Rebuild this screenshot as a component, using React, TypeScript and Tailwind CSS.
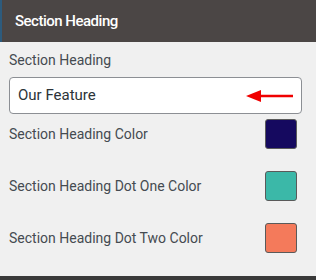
import React from "react";

const Swatch = ({ color }: { color: string }) => (
  <div
    className="w-[32px] h-[30px] rounded-[3px] border border-[#5a5a5a] shrink-0"
    style={{ backgroundColor: color }}
  />
);

export default function App() {
  const rows = [
    { label: "Section Heading Color", color: "#15095f" },
    { label: "Section Heading Dot One Color", color: "#3bb8a8" },
    { label: "Section Heading Dot Two Color", color: "#f47a5b" },
  ];
  return (
    <div className="w-[316px] h-[280px] flex flex-col bg-[#f0f0f0] overflow-hidden" style={{ fontFamily: "Roboto, 'Liberation Sans', sans-serif" }}>
      <div className="h-[42px] shrink-0 bg-[#4b4645] border-l-2 border-[#2d5b7d] flex items-center pl-[13px]">
        <span className="text-white text-[15px] font-medium tracking-[-0.5px]">Section Heading</span>
      </div>
      <div className="flex-1 flex flex-col pl-[9px] pr-[14px]">
        <div className="mt-[9px] text-[14px] text-[#454b51] leading-[18px]">Section Heading</div>
        <div className="mt-[8px] h-[37px] bg-white border border-[#8c8f94] rounded-[4px] flex items-center pl-[8px] pr-[6px]">
          <span className="text-[15px] text-[#2c3338] flex-1">Our Feature</span>
          <svg width="48" height="14" viewBox="0 0 48 14" className="mr-[1px]">
            <line x1="12" y1="7" x2="47" y2="7" stroke="#f00000" strokeWidth="2.5" />
            <polygon points="0,7 15,1 15,13" fill="#f00000" />
          </svg>
        </div>
        <div className="mt-[5px] flex flex-col gap-[22px]">
          {rows.map((r, i) => (
            <div key={i} className="flex items-center justify-between pr-[5px]">
              <span className="text-[14px] text-[#454b51]">{r.label}</span>
              <Swatch color={r.color} />
            </div>
          ))}
        </div>
      </div>
      <div className="h-[4px] shrink-0 bg-[#3a3a3a]" />
    </div>
  );
}
